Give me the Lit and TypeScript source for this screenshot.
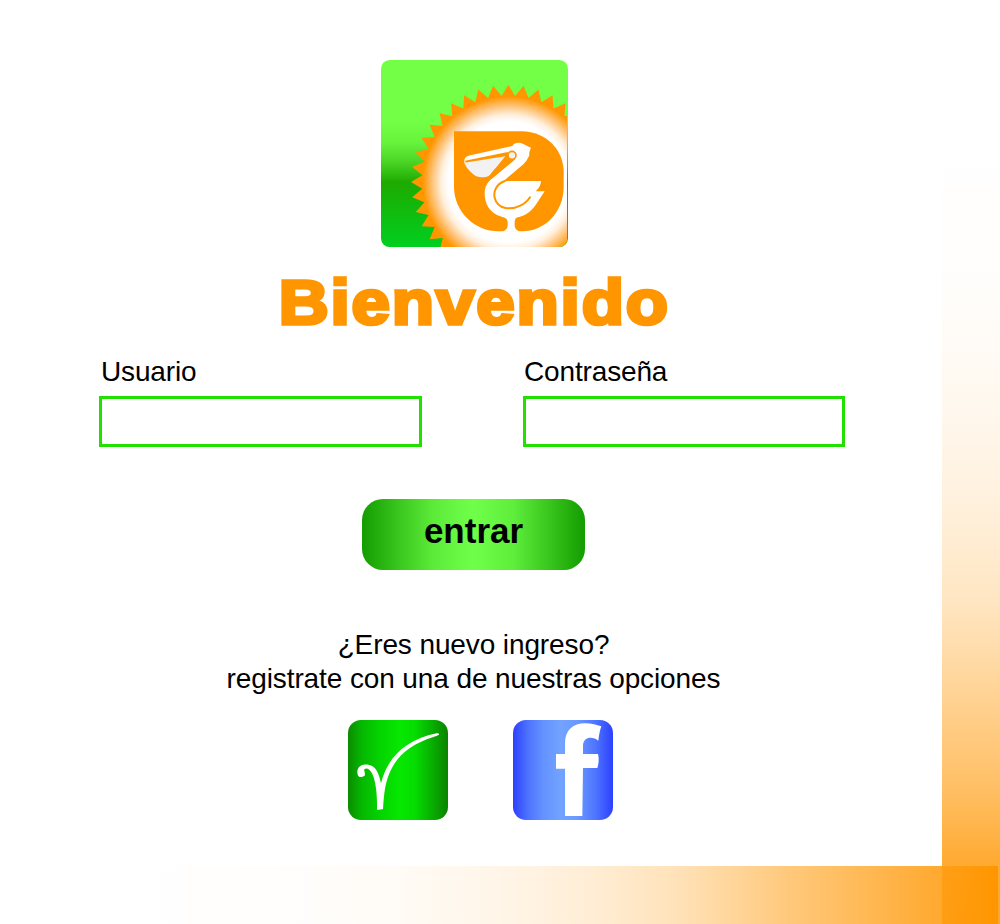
import { LitElement, html, css, svg } from "lit";
import { customElement } from "lit/decorators.js";

// Toothed outline of the sun: 40 spikes around its centre.
const sunPoints = Array.from({ length: 80 }, (_, i) => {
  const r = i % 2 ? 259 : 292;
  const a = (i * Math.PI) / 40;
  return `${(400 + r * Math.sin(a)).toFixed(1)},${(380 - r * Math.cos(a)).toFixed(1)}`;
}).join(" ");

@customElement("pelican-logo")
export class PelicanLogo extends LitElement {
  static styles = css`
    :host { display: block; width: 187px; height: 187px; }
    svg { display: block; width: 100%; height: 100%; }
  `;
  render() {
    return html`<svg viewBox="18 14 561 561" aria-hidden="true">${svg`
      <defs>
        <linearGradient id="sky" x1="0" y1="0" x2="0" y2="1">
          <stop offset="0" stop-color="#73ff46"></stop>
          <stop offset=".33" stop-color="#73ff46"></stop>
          <stop offset=".44" stop-color="#68f33c"></stop>
          <stop offset=".54" stop-color="#4cd727"></stop>
          <stop offset=".655" stop-color="#1eaa00"></stop>
          <stop offset="1" stop-color="#00d01f"></stop>
        </linearGradient>
        <radialGradient id="glow" gradientUnits="userSpaceOnUse" cx="400" cy="380" r="292">
          <stop offset=".62" stop-color="#fff"></stop>
          <stop offset=".69" stop-color="#fff0de"></stop>
          <stop offset=".78" stop-color="#ffc47a"></stop>
          <stop offset=".88" stop-color="#ff9600"></stop>
        </radialGradient>
        <clipPath id="tile"><rect x="18" y="14" width="561" height="561" rx="26"></rect></clipPath>
        <clipPath id="sunArea"><rect x="18" y="14" width="558" height="561" rx="20"></rect></clipPath>
      </defs>
      <g clip-path="url(#tile)">
        <rect x="18" y="14" width="561" height="561" fill="url(#sky)"></rect>
        <polygon points=${sunPoints} fill="url(#glow)" clip-path="url(#sunArea)"></polygon>
        <path fill="#ff9600" d="M237 228H440C515 229 566 285 566 350V395C566 470 510 528 440 528H370C300 528 237 470 237 395Z"></path>
        <path fill="#fff" d="M268 318C268 306 276 302 286 300L412 272C417 264 425 261 437 263C448 266 456 273 468 277C464 286 462 292 463 300C457 312 455 317 446 326L386 377H498C497 392 490 400 482 408H509L484 446C464 476 440 484 428 486C419 489 419 497 419 507C419 518 422 524 435 529H383C395 524 398 518 398 507C399 493 396 488 380 484C345 475 329 447 329 413C330 392 337 383 349 371L420 312L398 301L268 322Z"></path>
        <path fill="#ff9600" d="M270 316L398 290L402 305L420 312L349 371L300 350L272 321Z"></path>
        <path fill="#f2f2f2" d="M268 322L391 303C374 324 358 343 345 358Q338 366 320 366Q305 366 294 356Q272 337 268 322Z"></path>
        <circle cx="411" cy="300" r="12" fill="#f2f2f2" stroke="#ff9600" stroke-width="5"></circle>
        <path fill="none" stroke="#ff9600" stroke-width="6" d="M390 377C362 386 355 411 359 427C368 464 410 464 436 451Q455 442 465 426" stroke-linecap="round"></path>
      </g>`}</svg>`;
  }
}

@customElement("app-root")
export class AppRoot extends LitElement {
  static styles = css`
    :host {
      display: grid;
      grid-template-columns: 942px 58px;
      grid-template-rows: 866px 58px;
      width: 1000px;
      height: 924px;
      overflow: hidden;
      background: #fff;
      color: #000;
      font-family: "Liberation Sans", Arial, sans-serif;
      font-size: 28px;
    }
    * { box-sizing: border-box; }
    .side {
      grid-area: 1 / 2 / 3 / 3;
      background: linear-gradient(to bottom, rgba(255,150,0,0) 14%, rgba(255,150,0,.02) 33%,
        rgba(255,150,0,.07) 45%, rgba(255,150,0,.14) 55%, rgba(255,150,0,.24) 65%,
        rgba(255,150,0,.36) 72%, rgba(255,150,0,.6) 85%, rgba(255,150,0,.82) 94%, rgba(255,150,0,.85) 100%);
    }
    .foot {
      grid-area: 2 / 1 / 3 / 3;
      display: grid;
      grid-template-columns: 942px 56px;
    }
    .fade {
      background: linear-gradient(to right, rgba(255,150,0,0) 12%, rgba(255,150,0,.015) 32%,
        rgba(255,150,0,.03) 41%, rgba(255,150,0,.09) 53%, rgba(255,150,0,.17) 63%,
        rgba(255,150,0,.28) 72%, rgba(255,150,0,.52) 84%, rgba(255,150,0,.82) 100%);
    }
    .corner { background: linear-gradient(to right, rgba(255,150,0,.5), rgb(255,150,0)); }
    main {
      grid-area: 1 / 1 / 2 / 2;
      display: flex;
      flex-direction: column;
      padding: 60px 0 0 99px;
    }
    .center { display: flex; flex-direction: column; align-items: center; width: 749px; }
    .brand { width: 751px; }
    h1 {
      margin: 16px 0 1px -1px;
      height: 78px;
      line-height: 78px;
      color: #ff9600;
      font-weight: bold;
      font-size: 63px;
      letter-spacing: 1.7px;
      -webkit-text-stroke: 3.6px #ff9600;
      transform: scaleX(1.097);
      white-space: nowrap;
    }
    .fields { display: grid; grid-template-columns: 323px 322px; column-gap: 101px; margin-top: 14px; }
    label { display: block; height: 40px; padding-left: 2px; line-height: 32px; letter-spacing: -0.15px; white-space: nowrap; }
    .pass { padding-left: 1px; }
    input {
      display: block;
      width: 100%;
      height: 51px;
      margin: 0;
      padding: 0 10px;
      border: 3px solid #22e000;
      border-radius: 0;
      background: #fff;
      font: inherit;
      outline: none;
    }
    button {
      width: 223px;
      height: 71px;
      margin: 52px 0 0;
      padding: 0 0 8px;
      border: 0;
      border-radius: 21px;
      background: linear-gradient(to right, #149c00, #3bc81f 17%, #5ceb39 32%, #70ff49 50%, #5eee3b 68%, #3bc81f 83%, #149c00);
      color: #000;
      font: bold 35px "Liberation Sans", Arial, sans-serif;
    }
    p { margin: 58px 0 0; line-height: 34px; letter-spacing: -0.11px; text-align: center; white-space: nowrap; }
    .options { display: flex; gap: 65px; margin: 24px 0 0 14px; }
    .options svg { display: block; width: 100px; height: 100px; border-radius: 13px; }
    .own { background: linear-gradient(to right, #0b8c00, #05b800 14%, #04d400 32%, #06e800 52%, #05dc00 67%, #08ac00 85%, #0b8200); }
    .fb { background: linear-gradient(to right, #2c40ff, #4b70ff 14%, #6492ff 30%, #72a3ff 48%, #6b99ff 64%, #4d74ff 83%, #2c40ff); }
  `;

  render() {
    return html`
      <div class="side"></div>
      <div class="foot"><div class="fade"></div><div class="corner"></div></div>
      <main>
        <div class="center brand">
          <pelican-logo></pelican-logo>
          <h1>Bienvenido</h1>
        </div>
        <div class="fields">
          <div><label for="user">Usuario</label><input id="user" type="text" /></div>
          <div><label class="pass" for="pass">Contraseña</label><input id="pass" type="password" /></div>
        </div>
        <div class="center">
          <button>entrar</button>
          <p>¿Eres nuevo ingreso?<br />registrate con una de nuestras opciones</p>
          <div class="options">
            <svg class="own" viewBox="24 30 300 300">
              <path fill="#fff" d="M52 187C52 170 65 162 85 164C108 168 117 190 123 220C140 150 190 90 290 70Q298 69 297 74Q293 77 280 81C190 110 145 160 133 250Q130 275 129 297Q120 300 111 299Q112 240 102 205C95 180 80 168 72 180Q76 188 74 197Q64 203 57 200Q52 196 52 187Z"></path>
            </svg>
            <svg class="fb" viewBox="24 30 300 300">
              <path fill="#fff" d="M180 318V176H153V132H180V100C180 60 205 40 240 40C260 40 275 45 289 49Q283 65 280 92C265 79 234 78 234 108V132H279Q284 152 277 174H234L232 318Z"></path>
            </svg>
          </div>
        </div>
      </main>
    `;
  }
}
